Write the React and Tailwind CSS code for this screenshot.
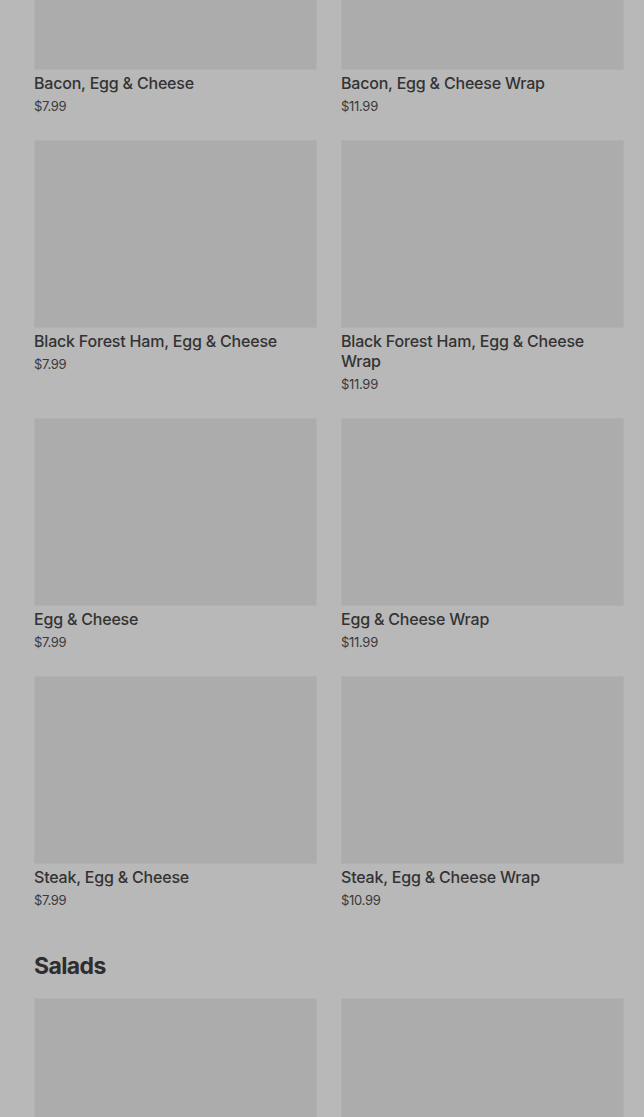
import React from 'react';

const breakfast = [
  { name: 'Bacon, Egg & Cheese', price: '$7.99' },
  { name: 'Bacon, Egg & Cheese Wrap', price: '$11.99' },
  { name: 'Black Forest Ham, Egg & Cheese', price: '$7.99' },
  { name: 'Black Forest Ham, Egg & Cheese Wrap', price: '$11.99' },
  { name: 'Egg & Cheese', price: '$7.99' },
  { name: 'Egg & Cheese Wrap', price: '$11.99' },
  { name: 'Steak, Egg & Cheese', price: '$7.99' },
  { name: 'Steak, Egg & Cheese Wrap', price: '$10.99' },
];

const salads = [
  { name: 'Chicken Caesar Salad', price: '$9.99' },
  { name: 'Garden Salad', price: '$8.99' },
];

const ItemCard = ({ item }) => (
  <div className="flex flex-col">
    <div className="h-[188px] w-full bg-[#acacac] border border-[#b1b1b1]" />
    <div className="mt-[3px] text-[16px] leading-5 font-medium tracking-[-0.2px] text-[#333333]">{item.name}</div>
    <div className="mt-[3px] text-[13px] leading-5 tracking-[-0.3px] text-[#3a3a3a]">{item.price}</div>
  </div>
);

const App = () => {
  return (
    <div
      className="h-[1117px] bg-[#b8b8b8] overflow-hidden"
      style={{ fontFamily: 'Inter, Roboto, "Liberation Sans", sans-serif' }}
    >
      <div className="pl-[34px] pr-[20px] -mt-[118px]">
        <div className="grid grid-cols-2 gap-x-6 gap-y-6">
          {breakfast.map((item) => (
            <ItemCard key={item.name} item={item} />
          ))}
        </div>

        <h2 className="mt-10 mb-4 text-[23px] leading-8 font-bold tracking-[-0.6px] text-[#2e2e2e]">Salads</h2>
        <div className="grid grid-cols-2 gap-x-6 gap-y-6 pb-10">
          {salads.map((item) => (
            <ItemCard key={item.name} item={item} />
          ))}
        </div>
      </div>
    </div>
  );
};

export default App;
